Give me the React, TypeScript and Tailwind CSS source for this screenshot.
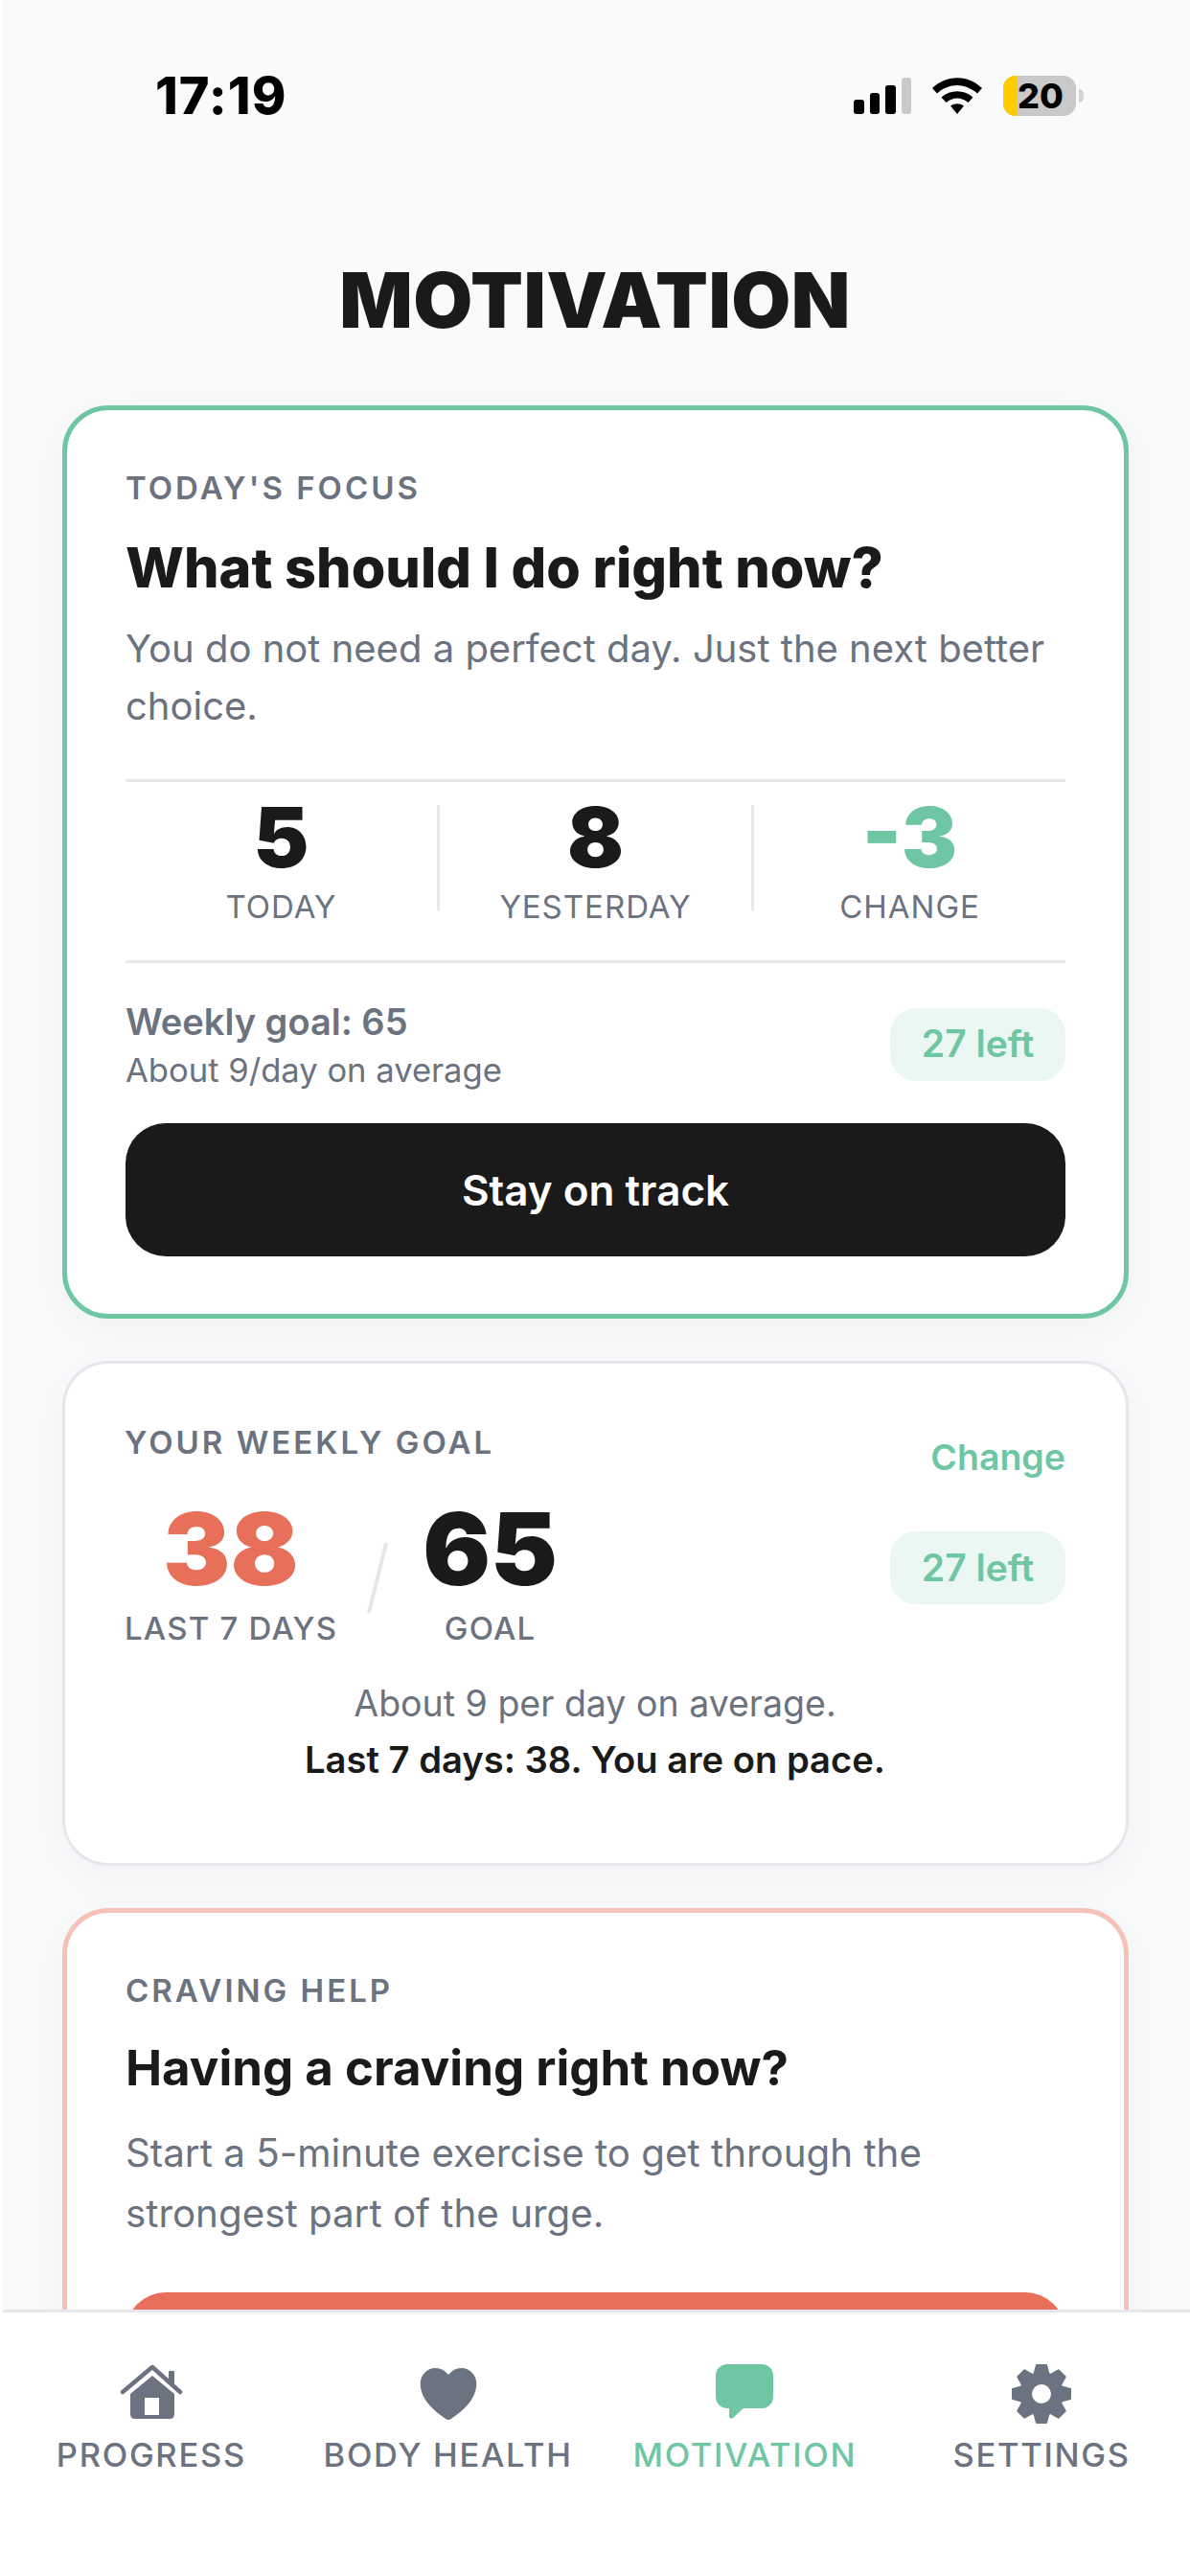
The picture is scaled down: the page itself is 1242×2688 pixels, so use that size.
import { IoHeart } from "react-icons/io5";

function StatusBar() {
  return (
    <div className="h-[150px] flex justify-between items-start pl-[159px] pr-[111px] pt-[66px]">
      <span className="text-[54px] leading-[68px] font-extrabold text-black tracking-[1px]">17:19</span>
      <div className="flex items-center gap-[22px] mt-[13px]">
        <svg width="60" height="38" viewBox="0 0 60 38">
          <rect x="0" y="23" width="11" height="15" rx="3" fill="#000" />
          <rect x="17" y="16" width="10" height="22" rx="3" fill="#000" />
          <rect x="33" y="8" width="11" height="30" rx="3" fill="#000" />
          <rect x="50" y="0" width="10" height="38" rx="3" fill="#c8c9c8" />
        </svg>
        <svg width="52" height="38" viewBox="0 0 52 38">
          <path d="M0 11 C15 -3.500 37 -3.500 52 11 L47 16.500 C34.500 5 17.500 5 5 16.500 Z" fill="#000" />
          <path d="M9.500 20.500 C19 12 33 12 42.500 20.500 L37.500 26 C30.500 20 21.500 20 14.500 26 Z" fill="#000" />
          <path d="M19 29.500 C23 26.500 29 26.500 33 29.500 L26 38 Z" fill="#000" />
        </svg>
        <div className="flex items-center gap-[3px]">
          <div className="w-[76px] h-[42px] rounded-[13px] bg-[#c8c9c8] overflow-hidden flex items-center">
            <div className="w-[15px] h-full bg-[#ffcc00]" />
            <span className="text-[36px] leading-[42px] font-extrabold text-black">20</span>
          </div>
          <div className="w-[5px] h-[14px] rounded-r-full bg-[#d3d4d3]" />
        </div>
      </div>
    </div>
  );
}

function HomeIcon() {
  return (
    <svg width="72" height="72" viewBox="0 0 72 72" fill="currentColor">
      <path d="M6 34 L37 8 L66 34" fill="none" stroke="currentColor" strokeWidth="4.500" strokeLinecap="round" strokeLinejoin="round" />
      <rect x="54" y="12" width="6" height="14" rx="1" />
      <path d="M37 17 L60 36 V57 Q60 62 55 62 H19 Q14 62 14 57 V36 Z" />
      <rect x="29" y="40" width="15" height="18" fill="#fff" />
    </svg>
  );
}

function ChatIcon() {
  return (
    <svg width="72" height="72" viewBox="0 0 72 72" fill="currentColor">
      <rect x="6" y="5" width="60" height="46" rx="12" />
      <path d="M20 48 V60 Q21 63 24 61 L36 50 Z" />
    </svg>
  );
}

function GearIcon() {
  const angles = [0, 45, 90, 135, 180, 225, 270, 315];
  return (
    <svg width="72" height="72" viewBox="-36 -36 72 72" fill="currentColor">
      <circle r="16.500" fill="none" stroke="currentColor" strokeWidth="13" />
      {angles.map((a) => (
        <path
          key={a}
          d="M-5 -30 L5 -30 L8 -19 L-8 -19 Z"
          stroke="currentColor"
          strokeWidth="2"
          strokeLinejoin="round"
          transform={`rotate(${a})`}
        />
      ))}
    </svg>
  );
}

function Eyebrow({ children }: { children: React.ReactNode }) {
  return (
    <div className="text-[33px] leading-[40px] font-semibold tracking-[3px] text-[#6b7280]">{children}</div>
  );
}

function LeftPill() {
  return (
    <div className="h-[76px] w-[183px] rounded-[27px] bg-[#ebf7f2] flex items-center justify-center text-[39px] font-semibold text-[#6ec6a2]">
      27 left
    </div>
  );
}

function Stat({ value, label, color }: { value: string; label: string; color: string }) {
  return (
    <div className="flex-1 flex flex-col items-center">
      <div className={`text-[87px] leading-[68px] font-black ${color}`}>{value}</div>
      <div className="mt-[18px] text-[33px] leading-[40px] tracking-[1px] text-[#6b7280]">{label}</div>
    </div>
  );
}

function FocusCard() {
  return (
    <div className="rounded-[48px] border-[5px] border-[#6ec6a2] bg-white px-[61px] pt-[61px] pb-[60px] shadow-[0_12px_48px_rgba(0,0,0,0.04)]">
      <Eyebrow>TODAY'S FOCUS</Eyebrow>
      <h2 className="mt-[27px] text-[57.6px] leading-[72px] font-extrabold text-[#1a1a1a]">What should I do right now?</h2>
      <p className="mt-[19px] text-[40px] leading-[60px] text-[#6b7280]">
        You do not need a perfect day. Just the next better choice.
      </p>
      <div className="mt-[46px] border-y-[3px] border-[#e5e7eb] pt-[24px] pb-[36px] flex items-start">
        <Stat value="5" label="TODAY" color="text-[#1a1a1a]" />
        <div className="w-[3px] h-[110px] bg-[#e5e7eb]" />
        <Stat value="8" label="YESTERDAY" color="text-[#1a1a1a]" />
        <div className="w-[3px] h-[110px] bg-[#e5e7eb]" />
        <Stat value="-3" label="CHANGE" color="text-[#6ec6a2]" />
      </div>
      <div className="mt-[33px] flex items-center justify-between">
        <div className="pt-[3px]">
          <div className="text-[38px] leading-[50px] font-semibold text-[#6b7280]">Weekly goal: 65</div>
          <div className="text-[34.6px] leading-[50px] text-[#6b7280]">About 9/day on average</div>
        </div>
        <LeftPill />
      </div>
      <button className="mt-[31px] w-full h-[139px] rounded-[42px] bg-[#1a1a1a] text-white text-[44px] font-semibold">
        Stay on track
      </button>
    </div>
  );
}

function GoalCard() {
  return (
    <div className="mt-[44px] rounded-[48px] border-[3px] border-[#e5e7eb] bg-white pl-[62px] pr-[63px] pt-[62px] pb-[79px] shadow-[0_12px_48px_rgba(0,0,0,0.04)]">
      <div className="flex items-start justify-between">
        <Eyebrow>YOUR WEEKLY GOAL</Eyebrow>
        <button className="mt-[11px] text-[37.5px] leading-[50px] font-semibold text-[#6ec6a2]">Change</button>
      </div>
      <div className="mt-[17px] flex items-start justify-between">
        <div className="flex items-start">
          <div className="flex flex-col items-center">
            <div className="text-[105px] leading-[105px] font-black text-[#e8705a]">38</div>
            <div className="mt-[11px] text-[33px] leading-[40px] font-medium tracking-[1.2px] text-[#6b7280]">LAST 7 DAYS</div>
          </div>
          <div className="mt-[46px] ml-[40px] mr-[45px] w-[4px] h-[75px] bg-[#e5e7eb] rotate-[14deg]" />
          <div className="flex flex-col items-center">
            <div className="text-[105px] leading-[105px] font-black text-[#1a1a1a]">65</div>
            <div className="mt-[11px] text-[33px] leading-[40px] font-medium tracking-[1.2px] text-[#6b7280]">GOAL</div>
          </div>
        </div>
        <div className="mt-[35px]">
          <LeftPill />
        </div>
      </div>
      <p className="mt-[30px] text-center text-[37.5px] leading-[58px] text-[#6b7280]">About 9 per day on average.</p>
      <p className="text-center text-[38.2px] leading-[58px] font-semibold text-[#1a1a1a]">Last 7 days: 38. You are on pace.</p>
    </div>
  );
}

function CravingCard() {
  return (
    <div className="mt-[44px] rounded-[48px] border-[5px] border-[#f6c2b8] bg-white px-[61px] pt-[61px] pb-[60px] shadow-[0_12px_48px_rgba(0,0,0,0.04)]">
      <Eyebrow>CRAVING HELP</Eyebrow>
      <h2 className="mt-[27px] text-[51px] leading-[68px] font-bold text-[#1a1a1a]">Having a craving right now?</h2>
      <p className="mt-[23px] text-[40.3px] leading-[63px] text-[#6b7280]">
        Start a 5-minute exercise to get through the strongest part of the urge.
      </p>
      <button className="mt-[51px] w-full h-[139px] rounded-[42px] bg-[#e8705a]" />
    </div>
  );
}

function TabBar() {
  const gray = "text-[#6b7280]";
  return (
    <nav className="h-[278px] shrink-0 border-t-[3px] border-[#e5e7eb] bg-white grid grid-cols-4 pt-[49px] items-start">
      <div className={`flex flex-col items-center ${gray}`}>
        <HomeIcon />
        <span className="mt-[6px] text-[34.5px] leading-[44px] font-medium tracking-[1.7px]">PROGRESS</span>
      </div>
      <div className={`flex flex-col items-center ${gray}`}>
        <IoHeart size={72} />
        <span className="mt-[6px] text-[34.5px] leading-[44px] font-medium tracking-[1.7px]">BODY HEALTH</span>
      </div>
      <div className="flex flex-col items-center text-[#6ec6a2]">
        <ChatIcon />
        <span className="mt-[6px] text-[34.5px] leading-[44px] font-medium tracking-[1.7px]">MOTIVATION</span>
      </div>
      <div className={`flex flex-col items-center ${gray}`}>
        <GearIcon />
        <span className="mt-[6px] text-[34.5px] leading-[44px] font-medium tracking-[1.7px]">SETTINGS</span>
      </div>
    </nav>
  );
}

export default function App() {
  return (
    <div className="h-[2688px] overflow-hidden bg-white pl-[3px] font-['Inter',sans-serif]">
      <div className="h-full flex flex-col bg-[#f9fafc]">
        <div className="flex-1 overflow-hidden">
          <StatusBar />
          <h1 className="mt-[123px] pr-[3px] h-[80px] leading-[80px] text-center text-[80px] font-black text-[#1a1a1a] tracking-[0.5px]">
            MOTIVATION
          </h1>
          <div className="mt-[70px] ml-[62px] mr-[64px]">
            <FocusCard />
            <GoalCard />
            <CravingCard />
          </div>
        </div>
        <TabBar />
      </div>
    </div>
  );
}
